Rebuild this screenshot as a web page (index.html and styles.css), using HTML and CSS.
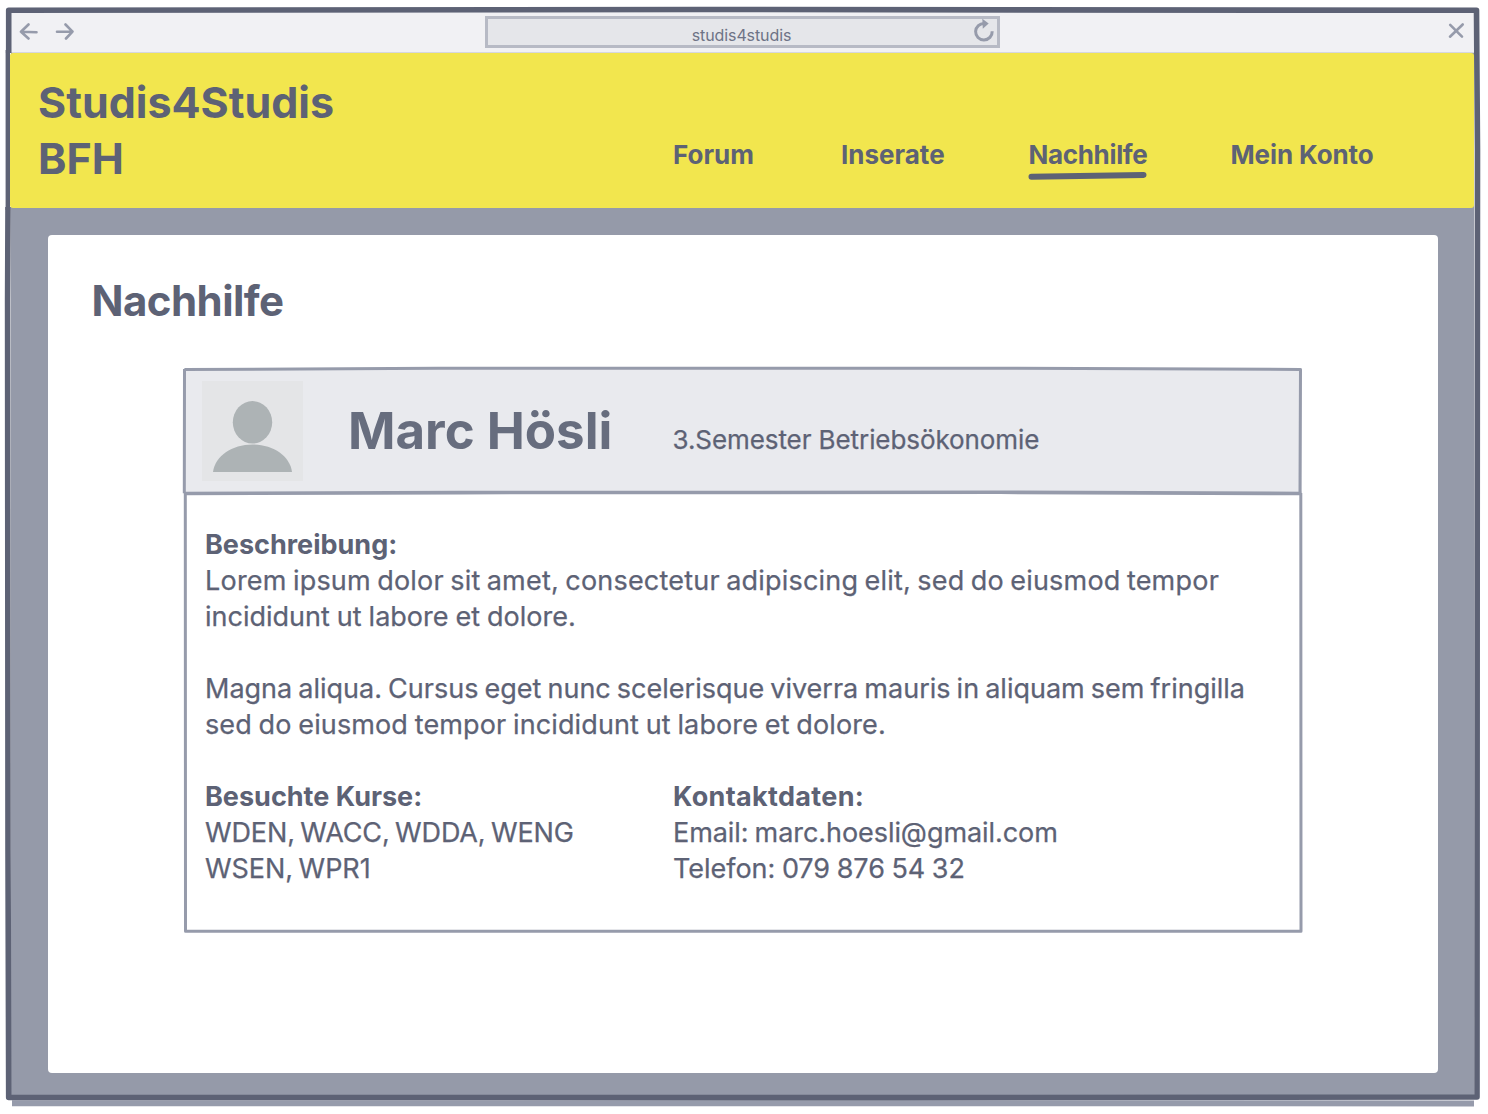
FILE: index.html
```html
<!DOCTYPE html>
<html lang="de">
<head>
<meta charset="utf-8">
<title>Studis4Studis</title>
<link rel="stylesheet" href="styles.css">
</head>
<body>
<div class="window">
  <div class="toolbar">
    <div class="history">
      <svg width="20" height="18" viewBox="0 0 20 18"><path d="M17.5 9.2L2 8.8M9.5 1.5L2 8.8L9.5 15.5"/></svg>
      <svg width="20" height="18" viewBox="0 0 20 18"><path d="M2 8.8L17.5 8.6M10.5 1.5L17.5 8.6L11 15.5"/></svg>
    </div>
    <div class="address">
      <span class="url">studis4studis</span>
      <svg class="reload" width="22" height="26" viewBox="0 0 22 26"><path d="M19.2 12.3A8.3 8.3 0 1 1 11.5 4.4"/><path class="tip" d="M9.3 -.2L15.7 4.5L9.8 9.8Z"/></svg>
    </div>
    <svg class="close" width="18" height="18" viewBox="0 0 18 18"><path d="M3.2 2.8L15 14.7M15.7 2.5L3 14.7"/></svg>
  </div>
  <header class="header">
    <div class="brand">Studis4Studis<br>BFH</div>
    <nav class="nav">
      <a class="forum">Forum</a>
      <a class="inserate">Inserate</a>
      <a class="active">Nachhilfe<svg class="underline" width="120" height="10" viewBox="0 0 120 10"><path d="M3.5 5.7L115.5 3.9"/></svg></a>
      <a class="konto">Mein Konto</a>
    </nav>
  </header>
  <main class="panel">
    <h1 class="title">Nachhilfe</h1>
    <article class="card">
      <div class="card-head">
        <svg class="avatar" width="101" height="101" viewBox="0 0 101 101"><rect width="101" height="100" fill="#e4e5e7"/><ellipse cx="50.5" cy="41.3" rx="19.7" ry="21.2"/><path d="M11 91C13 75 30 63.5 50.5 63.5S88 75 90 91Z"/></svg>
        <h2 class="name">Marc Hösli</h2>
        <p class="study">3.Semester Betriebsökonomie</p>
      </div>
      <div class="card-body">
        <h3>Beschreibung:</h3>
        <p class="l1">Lorem ipsum dolor sit amet, consectetur adipiscing elit, sed do eiusmod tempor</p>
        <p class="l2">incididunt ut labore et dolore.</p>
        <p class="l3">Magna aliqua. Cursus eget nunc scelerisque viverra mauris in aliquam sem fringilla</p>
        <p class="l4">sed do eiusmod tempor incididunt ut labore et dolore.</p>
        <div class="details">
          <section>
            <h3 class="kurse">Besuchte Kurse:</h3>
            <p class="k1">WDEN, WACC, WDDA, WENG</p>
            <p class="k2">WSEN, WPR1</p>
          </section>
          <section>
            <h3 class="kontakt">Kontaktdaten:</h3>
            <p class="mail">Email: marc.hoesli@gmail.com</p>
            <p class="tel">Telefon: 079 876 54 32</p>
          </section>
        </div>
      </div>
      <svg class="card-lines" width="1122" height="568" viewBox="182 366 1122 568">
        <path d="M184.5 369.6L438 368.3L1000 368.2L1300.5 369.4L1300 492.5M184.5 369L184.3 493.3M185.3 493L185.5 931.3L1301 931.3L1300.8 493"/>
        <path class="divider" d="M184 493.5L460 492.6L1000 492.3L1301.5 493.5"/>
      </svg>
    </article>
  </main>
  <svg class="frame" width="1488" height="1114" viewBox="0 0 1488 1114">
    <path class="shadow" d="M12 1103.2L1474 1103.4"/>
    <path d="M8.7 53L8.7 10.3L700 9.5L1476.5 10.3L1477.5 150L1477.2 560L1477 1097L900 1097.6L8.7 1097.5L8 850L7.6 300L8 207"/>
    <path class="left-edge" d="M7.8 50L7.8 210"/>
  </svg>
</div>
</body>
</html>
```
FILE: styles.css
```css
* { box-sizing: border-box; }
body {
  margin: 0;
  background: #fff;
  color: #5d6275;
  font-family: Inter, "Liberation Sans", sans-serif;
}
h1, h2, h3, p { margin: 0; white-space: nowrap; }
svg { display: block; }
.window {
  position: relative;
  width: 1488px;
  height: 1114px;
  padding: 12px 14px 14px 10px;
  background: linear-gradient(#959aa9, #959aa9) 11px 53px / 1463px 1046px no-repeat;
}
.toolbar {
  display: grid;
  grid-template-columns: 475px 515px 1fr;
  height: 41px;
  background: #f1f1f4;
  border-bottom: 1px solid #d6d7df;
}
.toolbar svg {
  fill: none;
  stroke: #969bab;
  stroke-width: 2.6;
  stroke-linecap: round;
  stroke-linejoin: round;
}
.history { display: flex; gap: 16px; padding: 10.5px 0 0 9px; }
.address {
  display: grid;
  grid-template-columns: 1fr 22px;
  margin-top: 4px;
  height: 32px;
  border: 3px solid #b7bac5;
  background: #e5e6ea;
}
.url {
  padding: 4px 0 0 20px;
  text-align: center;
  font-size: 16px;
  line-height: 24px;
  letter-spacing: -.1px;
  color: #6e7386;
}
.address .reload { margin: 0 0 0 -2px; stroke-width: 3; stroke-linecap: butt; overflow: visible; }
.address .tip { fill: #969bab; stroke-width: 0; }
.close { justify-self: end; margin: 10px 9px 0 0; }
.header {
  display: flex;
  height: 155px;
  padding: 21px 0 0 28px;
  background: #f2e64e;
  border-radius: 3px;
}
.brand { width: 635px; font-size: 43px; font-weight: 700; line-height: 56px; }
.nav {
  display: grid;
  grid-template-columns: 168px 187.5px 202px auto;
  padding-top: 63px;
  font-size: 26px;
  font-weight: 700;
  line-height: 36px;
  white-space: nowrap;
}
.active { position: relative; letter-spacing: -.33px; }
.konto { letter-spacing: -.1px; }
.underline {
  position: absolute;
  left: -1px;
  top: 34px;
  fill: none;
  stroke: #5d6275;
  stroke-width: 6;
  stroke-linecap: round;
}
.panel {
  width: 1390px;
  height: 838px;
  margin: 27px 0 0 38px;
  padding: 38px 0 0 43.5px;
  background: #fff;
  border-radius: 4px;
}
.title { font-size: 42px; line-height: 56px; letter-spacing: -.55px; }
.card { position: relative; width: 1118px; margin: 39px 0 0 92px; }
.card-head {
  display: grid;
  grid-template-columns: 145px 325px auto;
  height: 125px;
  padding: 13px 0 0 19px;
  background: #e9eaee;
}
.avatar { margin-left: -.5px; fill: #adb3b5; }
.name { padding: 18px 0 0 .5px; font-size: 51px; line-height: 64px; color: #676d7e; }
.study { padding-top: 41px; font-size: 26px; line-height: 36px; letter-spacing: -.08px; }
.card-body { height: 439px; padding: 34px 0 0 21.5px; font-size: 27px; line-height: 36px; }
.card-body h3 { font-size: 27px; }
.card-body p, .study { -webkit-text-stroke: .25px #5d6275; }
.l1 { word-spacing: -1.5px; letter-spacing: .21px; }
.l2 { word-spacing: -.6px; }
.l3 { word-spacing: -1.5px; }
.l4 { word-spacing: -1px; letter-spacing: .12px; }
.l2, .l4 { margin-bottom: 36px; }
.k1 { word-spacing: -2px; letter-spacing: -.13px; }
.k2 { word-spacing: -2px; letter-spacing: -.05px; }
.mail { word-spacing: -1.5px; letter-spacing: -.06px; }
.tel { word-spacing: -1px; letter-spacing: -.02px; }
.kontakt { letter-spacing: .33px; }
.details { display: grid; grid-template-columns: 468px auto; }
.card-lines {
  position: absolute;
  left: -2px;
  top: -2px;
  fill: none;
  stroke: #969bab;
  stroke-width: 3;
  stroke-linejoin: round;
}
.divider { stroke-width: 3.6; }
.frame {
  position: absolute;
  left: 0;
  top: 0;
  fill: none;
  stroke: #5d6275;
  stroke-width: 5.6;
  stroke-linejoin: round;
}
.shadow { stroke: #969bab; stroke-width: 6; }
.left-edge { stroke-width: 4.4; }
```
